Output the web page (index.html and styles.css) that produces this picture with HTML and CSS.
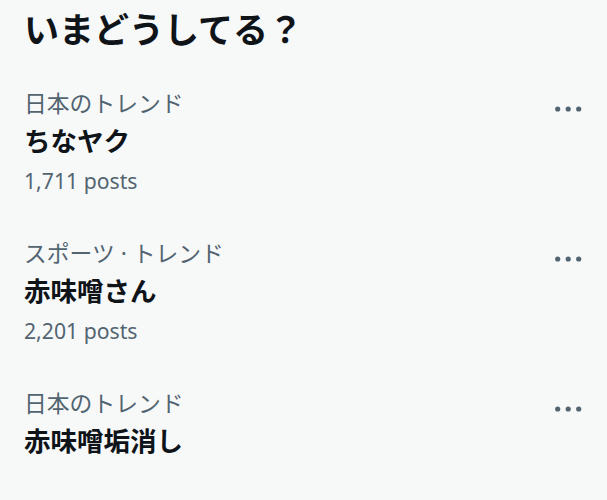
FILE: index.html
```html
<!DOCTYPE html>
<html lang="ja">
<head>
<meta charset="utf-8">
<link rel="stylesheet" href="styles.css">
</head>
<body>
<main class="panel">
  <h2 class="title">いまどうしてる？</h2>
  <div class="trend">
    <div class="info">
      <div class="category">日本のトレンド</div>
      <div class="name">ちなヤク</div>
      <div class="count">1,711 posts</div>
    </div>
    <div class="more"><svg width="27" height="6" viewBox="0 0 27 6"><circle cx="2.7" cy="3" r="2.6"/><circle cx="13.2" cy="3" r="2.6"/><circle cx="23.7" cy="3" r="2.6"/></svg></div>
  </div>
  <div class="trend">
    <div class="info">
      <div class="category">スポーツ · トレンド</div>
      <div class="name">赤味噌さん</div>
      <div class="count">2,201 posts</div>
    </div>
    <div class="more"><svg width="27" height="6" viewBox="0 0 27 6"><circle cx="2.7" cy="3" r="2.6"/><circle cx="13.2" cy="3" r="2.6"/><circle cx="23.7" cy="3" r="2.6"/></svg></div>
  </div>
  <div class="trend">
    <div class="info">
      <div class="category">日本のトレンド</div>
      <div class="name">赤味噌垢消し</div>
    </div>
    <div class="more"><svg width="27" height="6" viewBox="0 0 27 6"><circle cx="2.7" cy="3" r="2.6"/><circle cx="13.2" cy="3" r="2.6"/><circle cx="23.7" cy="3" r="2.6"/></svg></div>
  </div>
</main>
</body>
</html>
```
FILE: styles.css
```css
html, body {
  margin: 0;
  padding: 0;
  background: #f7f9f9;
}
body {
  font-family: "Noto Sans", "Noto Sans CJK JP", sans-serif;
  color: #0f1419;
}
.panel {
  display: flex;
  flex-direction: column;
}
.title {
  margin: 0;
  padding: 6px 24px 17px;
  font-family: "Noto Sans CJK JP", sans-serif;
  font-size: 35px;
  line-height: 44px;
  font-weight: 700;
}
.trend {
  display: flex;
  justify-content: space-between;
  align-items: flex-start;
  padding: 20px 25px 21px 24px;
}
.info {
  display: flex;
  flex-direction: column;
}
.category {
  font-family: "Noto Sans", "Noto Sans CJK JP", sans-serif;
  font-size: 22.8px;
  line-height: 34px;
  color: #536471;
}
.name {
  font-family: "Noto Sans CJK JP", sans-serif;
  font-size: 26.5px;
  line-height: 38px;
  font-weight: 700;
}
.count {
  margin-top: 7px;
  font-size: 21.2px;
  line-height: 30px;
  color: #536471;
}
.more {
  margin-top: 19px;
  display: flex;
  fill: #536471;
}
```
